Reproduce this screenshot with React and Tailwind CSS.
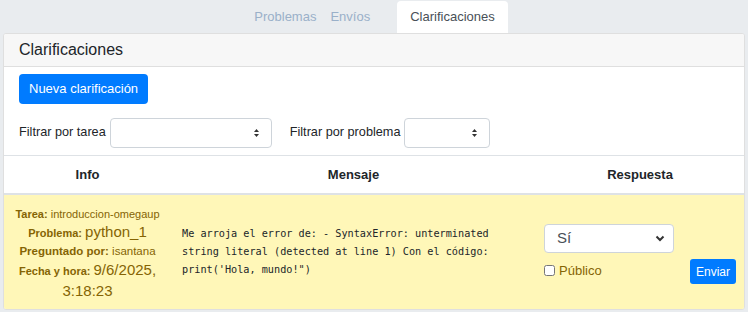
import { useState } from 'react';

const tabs = [
  { id: 'problems', label: 'Problemas' },
  { id: 'runs', label: 'Envíos' },
  { id: 'clarifications', label: 'Clarificaciones' },
];

function SortArrows() {
  return (
    <svg width="7" height="10" viewBox="0 0 7 10" className="text-[#333]">
      <path d="M3.5 1 L6 4 H1 Z" fill="currentColor" />
      <path d="M3.5 9 L6 6 H1 Z" fill="currentColor" />
    </svg>
  );
}

function FilterSelect({ width }) {
  return (
    <div
      className={`flex h-[30px] items-center justify-end rounded-[4px] border border-[#ced4da] bg-white pr-[11px] ${width}`}
    >
      <SortArrows />
    </div>
  );
}

export default function App() {
  const [active, setActive] = useState('clarifications');
  const [isPublic, setIsPublic] = useState(false);

  return (
    <div className="h-[312px] w-[748px] overflow-hidden bg-[#e9ecef] font-['Liberation_Sans',Arial,sans-serif] text-[#212529]">
      {/* tabs */}
      <div className="flex h-[33px] items-end justify-center pl-[7px]">
        {tabs.map((tab) => (
          <button
            key={tab.id}
            type="button"
            onClick={() => setActive(tab.id)}
            className={
              active === tab.id
                ? 'ml-[20px] h-[32px] rounded-t-[4px] bg-white px-[13px] text-[13px] text-[#495057]'
                : 'h-[32px] px-[7px] text-[13px] text-[#9ab0c9]'
            }
          >
            {tab.label}
          </button>
        ))}
      </div>

      {/* card */}
      <div className="mx-[3px] h-[277px] overflow-hidden rounded-[3px] border border-[#dfdfdf] bg-white">
        <div className="flex h-[33px] items-center border-b border-[#dfdfdf] bg-[#f7f7f7] px-[15px] text-[16px]">
          Clarificaciones
        </div>

        <div className="px-[15px] pt-[7px]">
          <button
            type="button"
            className="h-[30px] rounded-[4px] bg-[#007bff] px-[10px] text-[13px] text-white"
          >
            Nueva clarificación
          </button>

          <div className="mt-[14px] flex items-center text-[12.7px]">
            <span className="mr-[4px]">Filtrar por tarea</span>
            <FilterSelect width="w-[162px]" />
            <span className="ml-[18px] mr-[4px]">Filtrar por problema</span>
            <FilterSelect width="w-[86px]" />
          </div>
        </div>

        {/* table */}
        <div className="mt-[7px] grid grid-cols-[167px_365px_1fr] border-t border-[#dee2e6] text-[13px]">
          <div className="flex h-[39px] items-center justify-center border-b-2 border-[#dee2e6] font-bold">Info</div>
          <div className="flex h-[39px] items-center justify-center border-b-2 border-[#dee2e6] font-bold">Mensaje</div>
          <div className="flex h-[39px] items-center justify-center border-b-2 border-[#dee2e6] font-bold">Respuesta</div>

          <div className="flex h-[114px] flex-col items-center justify-center bg-[#fff7b8] px-[10px] pt-[3px] text-center leading-[18px] text-[#856404]">
            <div className="text-[11px]">
              <b>Tarea:</b> introduccion-omegaup
            </div>
            <div className="text-[11px]">
              <b>Problema:</b> <span className="text-[15px]">python_1</span>
            </div>
            <div className="text-[11.5px]">
              <b>Preguntado por:</b> isantana
            </div>
            <div className="text-[11px] leading-[20px]">
              <b>Fecha y hora:</b> <span className="text-[15px]">9/6/2025,</span>
              <br />
              <span className="text-[15px]">3:18:23</span>
            </div>
          </div>

          <div className="flex h-[114px] items-center bg-[#fff7b8] px-[11px] font-['DejaVu_Sans_Mono',monospace] text-[10.2px] leading-[18px] text-[#212529]">
            <p>
              Me arroja el error de: - SyntaxError: unterminated string literal (detected at line 1) Con el código:
              print('Hola, mundo!")
            </p>
          </div>

          <div className="flex h-[114px] items-center bg-[#fff7b8] pl-[8px]">
            <div className="flex items-end">
              <div className="flex flex-col">
                <div className="flex h-[29px] w-[130px] items-center justify-between rounded-[4px] border border-[#ced4da] bg-white pl-[12px] pr-[8px] text-[15px] text-[#495057]">
                  <span>Sí</span>
                  <svg width="10" height="7" viewBox="0 0 10 7">
                    <path d="M1.5 1.5 L5 5 L8.5 1.5" fill="none" stroke="#333" strokeWidth="2" />
                  </svg>
                </div>
                <label className="mt-[8px] flex items-center gap-[4px] text-[13px] text-[#856404]">
                  <input
                    type="checkbox"
                    checked={isPublic}
                    onChange={() => setIsPublic((prev) => !prev)}
                    className="m-0 h-[11px] w-[11px]"
                  />
                  Público
                </label>
              </div>
              <button
                type="button"
                className="-mb-[4px] ml-[16px] h-[25px] rounded-[3px] bg-[#007bff] px-[6px] text-[12px] text-white"
              >
                Enviar
              </button>
            </div>
          </div>
        </div>
      </div>
    </div>
  );
}
